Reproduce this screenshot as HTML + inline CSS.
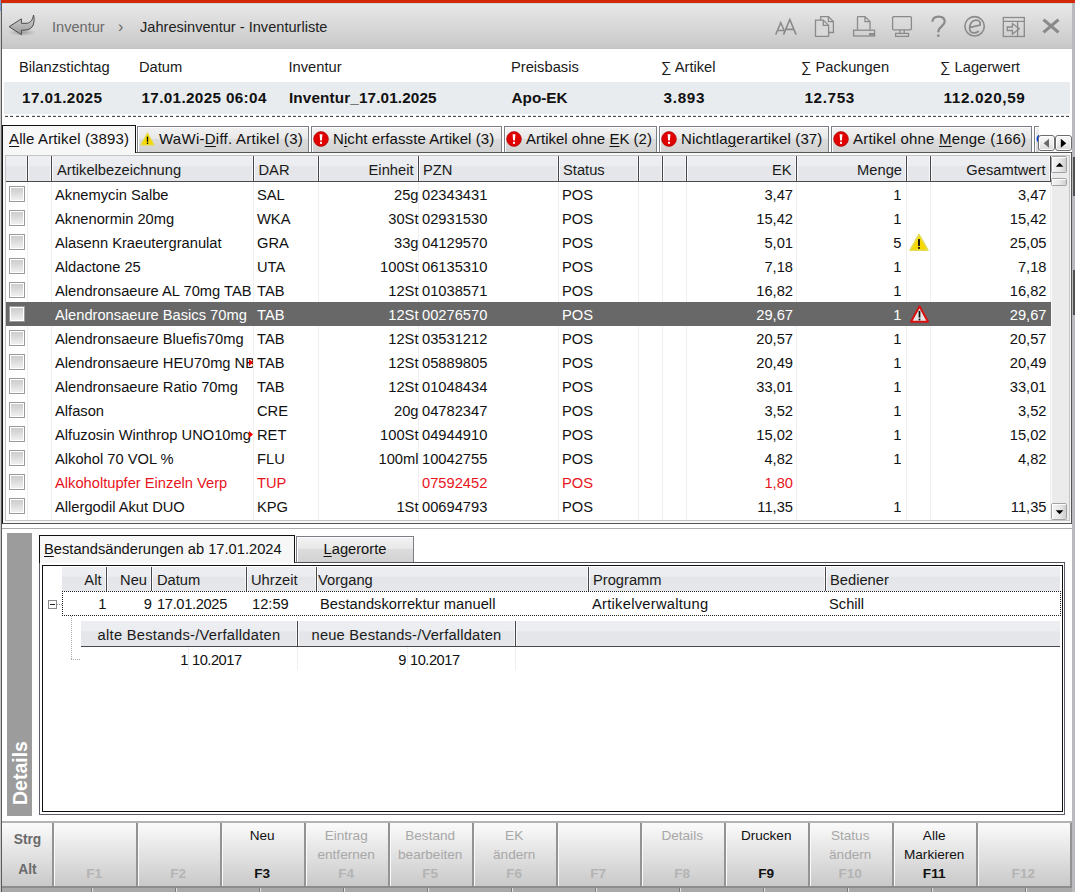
<!DOCTYPE html>
<html><head><meta charset="utf-8"><style>
html,body{margin:0;padding:0;}
body{width:1075px;height:892px;position:relative;overflow:hidden;background:#fff;font-family:"Liberation Sans", sans-serif;}
body>div, body>svg{position:absolute;}
.t{white-space:pre;line-height:1;}
u{text-decoration:underline;text-decoration-thickness:1px;text-underline-offset:2px;}
</style></head><body>
<div style="left:0px;top:0px;width:1075px;height:3px;background:#d42a08"></div>
<div style="left:0px;top:0px;width:1px;height:11px;background:#7d9fd6"></div>
<div style="left:0px;top:11px;width:1px;height:881px;background:#c8c8c8"></div>
<div style="left:1px;top:3px;width:1px;height:889px;background:#5a5a5a"></div>
<div style="left:1072px;top:3px;width:3px;height:889px;background:#b9babe"></div>
<div style="left:1073px;top:157px;width:2px;height:39px;background:#505050"></div>
<div style="left:1073px;top:270px;width:2px;height:45px;background:#505050"></div>
<div style="left:2px;top:3px;width:1070px;height:1px;background:#c9d9dc"></div>
<div style="left:2px;top:4px;width:1070px;height:45px;background:linear-gradient(#e8e8e8,#c9c9c9 95%,#c2c2c2)"></div>
<svg style="left:6px;top:12px" width="32" height="28" viewBox="6 12 32 28">
<defs><linearGradient id="ag" x1="0" y1="0" x2="0" y2="1"><stop offset="0" stop-color="#d4d4d4"/><stop offset="1" stop-color="#9a9a9a"/></linearGradient>
<radialGradient id="sh"><stop offset="0" stop-color="#000" stop-opacity=".25"/><stop offset="1" stop-color="#000" stop-opacity="0"/></radialGradient></defs>
<ellipse cx="22" cy="32.5" rx="14" ry="3.5" fill="url(#sh)"/>
<path d="M9.1 26.7 L21.4 18.9 L21.4 23.3 L26 23.3 C29.6 23.3 32.6 21 33.5 15 C34.4 17.6 34.3 22 33.2 25 C31.8 28.5 28.5 30.1 24 30.2 L21.4 30.2 L21.4 34.6 Z" fill="url(#ag)" stroke="#4a4a4a" stroke-width="1" stroke-linejoin="miter"/>
</svg>
<div class="t" style="left:52px;top:19.94px;font-size:14.60px;font-weight:normal;color:#6a6a6a;transform-origin:0 0;">Inventur</div>
<div class="t" style="left:118px;top:18.76px;font-size:16.00px;font-weight:normal;color:#6a6a6a;transform-origin:0 0;">&#8250;</div>
<div class="t" style="left:140px;top:19.94px;font-size:14.60px;font-weight:normal;color:#222;transform-origin:0 0;">Jahresinventur - Inventurliste</div>
<svg style="left:770px;top:10px" width="300" height="32" viewBox="770 10 300 32" fill="none" stroke="#8a8a8a" stroke-width="1.3">
<path d="M775.7 34.6 L780.7 22.6 L785 32.2 M777.8 30.5 H784.4" stroke-width="1.5"/>
<path d="M783.5 34.6 L789.8 19.5 L796.1 34.6 M786.2 29.4 H793.4" stroke-width="1.6"/>
<path d="M820.7 20 V16.6 H828.4 L833.4 21.6 V32.5 H828.8 M828.4 16.6 V21.6 H833.4"/>
<path d="M815.5 20.1 H823.3 L828.6 25.4 V36.4 H815.5 Z" fill="#d9d9d9"/>
<path d="M823.3 20.1 V25.4 H828.6"/>
<path d="M857.5 16.6 H865 L870 21.6 V30 M857.5 16.6 V30 M865 16.6 V21.6 H870"/>
<rect x="853.6" y="30.2" width="21" height="5.8"/>
<rect x="869" y="33" width="5" height="2.5" fill="#8a8a8a" stroke="none"/>
<rect x="892.6" y="16.6" width="18.8" height="13.2" rx="1.2"/>
<path d="M899.9 30 V33.3 M904.2 30 V33.3"/>
<rect x="895.6" y="33.4" width="12.9" height="3"/>
<path d="M932.4 21.8 C932.6 18.4 935 16.7 938.6 16.7 C942.4 16.7 944.7 18.8 944.7 21.8 C944.7 26 938.4 26.6 938.3 32.2" stroke-width="2.2"/>
<rect x="937.1" y="34.5" width="2.4" height="2.3" fill="#8a8a8a" stroke="none"/>
<circle cx="974.6" cy="26.3" r="9.7" stroke-width="1.6"/>
<path d="M970.4 27.3 L980.1 25 C980.9 21.7 978.7 20 976.1 20 C972.2 20 969.6 23.8 969.6 28 C969.6 31.3 971.3 32.8 973.7 32.8 C975.5 32.8 977.1 32.2 978.3 31.4" stroke-width="1.75" stroke-linecap="round"/>
<rect x="1003.3" y="17.5" width="21" height="19"/>
<path d="M1003.3 21.4 H1024.3 M1017.6 21.4 V36.5"/>
<path d="M1007.3 27 H1012.4 V23.5 L1019.3 28.8 L1012.4 34.1 V30.5 H1007.3 Z" stroke-linejoin="miter"/>
<path d="M1043.5 19.6 L1058.5 32.4 M1058.5 19.6 L1043.5 32.4" stroke-width="3.2"/>
</svg>
<div class="t" style="left:19px;top:60.16px;font-size:14.70px;font-weight:normal;color:#1a1a1a;transform-origin:0 0;">Bilanzstichtag</div>
<div class="t" style="left:139px;top:60.16px;font-size:14.70px;font-weight:normal;color:#1a1a1a;transform-origin:0 0;">Datum</div>
<div class="t" style="left:288.5px;top:60.16px;font-size:14.70px;font-weight:normal;color:#1a1a1a;transform-origin:0 0;">Inventur</div>
<div class="t" style="left:511px;top:60.16px;font-size:14.70px;font-weight:normal;color:#1a1a1a;transform-origin:0 0;">Preisbasis</div>
<div class="t" style="left:661px;top:60.16px;font-size:14.70px;font-weight:normal;color:#1a1a1a;transform-origin:0 0;">&#8721; Artikel</div>
<div class="t" style="left:801px;top:60.16px;font-size:14.70px;font-weight:normal;color:#1a1a1a;transform-origin:0 0;">&#8721; Packungen</div>
<div class="t" style="left:940px;top:60.16px;font-size:14.70px;font-weight:normal;color:#1a1a1a;transform-origin:0 0;">&#8721; Lagerwert</div>
<div style="left:4px;top:82px;width:1066px;height:32px;background:#e9ecef"></div>
<div class="t" style="left:22px;top:89.55px;font-size:15.30px;font-weight:bold;color:#111;transform-origin:0 0;letter-spacing:0.38px">17.01.2025</div>
<div class="t" style="left:141.5px;top:89.55px;font-size:15.30px;font-weight:bold;color:#111;transform-origin:0 0;letter-spacing:0.33px">17.01.2025 06:04</div>
<div class="t" style="left:289px;top:89.55px;font-size:15.30px;font-weight:bold;color:#111;transform-origin:0 0;letter-spacing:0.12px">Inventur_17.01.2025</div>
<div class="t" style="left:511.5px;top:89.55px;font-size:15.30px;font-weight:bold;color:#111;transform-origin:0 0;letter-spacing:0px">Apo-EK</div>
<div class="t" style="left:663.5px;top:89.55px;font-size:15.30px;font-weight:bold;color:#111;transform-origin:0 0;letter-spacing:0.7px">3.893</div>
<div class="t" style="left:804.5px;top:89.55px;font-size:15.30px;font-weight:bold;color:#111;transform-origin:0 0;letter-spacing:0.6px">12.753</div>
<div class="t" style="left:943.5px;top:89.55px;font-size:15.30px;font-weight:bold;color:#111;transform-origin:0 0;letter-spacing:0.62px">112.020,59</div>
<div style="left:5px;top:115px;width:1065px;height:1px;background:repeating-linear-gradient(90deg,#dfe2e5 0 3px,transparent 3px 5px,#dfe2e5 5px 8px,transparent 8px 11px,#dfe2e5 11px 14px,transparent 14px 16px)"></div>
<div style="left:5px;top:116px;width:1065px;height:1px;background:repeating-linear-gradient(90deg,#4a4a4a 0 3px,transparent 3px 5px,#4a4a4a 5px 8px,transparent 8px 11px,#4a4a4a 11px 14px,transparent 14px 16px)"></div>
<div style="left:2px;top:152px;width:1070px;height:1px;background:#555"></div>
<div style="left:2px;top:125px;width:134px;height:28px;background:#f7f7f7;border-top:1px solid #111;border-left:1px solid #111;border-right:1px solid #111;box-sizing:border-box"></div>
<div class="t" style="left:9px;top:131.10px;font-size:15.00px;font-weight:normal;color:#111;transform-origin:0 0;letter-spacing:0.13px"><u>A</u>lle Artikel (3893)</div>
<div style="left:137px;top:126px;width:172px;height:26px;background:linear-gradient(#f2f2f2 0,#e9e9e9 45%,#dcdcdc 50%,#d2d2d2 100%);border:1px solid #7c7e86;border-bottom:none;box-sizing:border-box;box-shadow:inset 1px 1px 0 #fff"></div>
<svg style="left:140px;top:132px" width="15" height="14" viewBox="0 0 15 14" preserveAspectRatio="none">
<path d="M7.5 1 L14.2 13 H0.8 Z" fill="#f7d900" stroke="#e3dc55" stroke-width="1.2" stroke-linejoin="round"/>
<rect x="6.8" y="4.6" width="1.4" height="5.2" fill="#111"/><rect x="6.8" y="10.6" width="1.4" height="1.4" fill="#111"/></svg>
<div class="t" style="left:159px;top:131.10px;font-size:15.00px;font-weight:normal;color:#111;transform-origin:0 0;letter-spacing:0.26px">WaWi-<u>D</u>iff. Artikel (3)</div>
<div style="left:311px;top:126px;width:191px;height:26px;background:linear-gradient(#f2f2f2 0,#e9e9e9 45%,#dcdcdc 50%,#d2d2d2 100%);border:1px solid #7c7e86;border-bottom:none;box-sizing:border-box;box-shadow:inset 1px 1px 0 #fff"></div>
<svg style="left:313px;top:130.5px" width="16" height="16" viewBox="0 0 16 16">
<circle cx="8" cy="8" r="7.4" fill="#e00000" stroke="#a00000" stroke-width="0.6"/>
<path d="M6.6 3.2 H9.4 L8.9 9.6 H7.1 Z" fill="#fff"/><rect x="7" y="10.8" width="2" height="2" fill="#fff"/></svg>
<div class="t" style="left:333px;top:131.10px;font-size:15.00px;font-weight:normal;color:#111;transform-origin:0 0;letter-spacing:0.08px">N<u>i</u>cht erfasste Artikel (3)</div>
<div style="left:504px;top:126px;width:153px;height:26px;background:linear-gradient(#f2f2f2 0,#e9e9e9 45%,#dcdcdc 50%,#d2d2d2 100%);border:1px solid #7c7e86;border-bottom:none;box-sizing:border-box;box-shadow:inset 1px 1px 0 #fff"></div>
<svg style="left:506px;top:130.5px" width="16" height="16" viewBox="0 0 16 16">
<circle cx="8" cy="8" r="7.4" fill="#e00000" stroke="#a00000" stroke-width="0.6"/>
<path d="M6.6 3.2 H9.4 L8.9 9.6 H7.1 Z" fill="#fff"/><rect x="7" y="10.8" width="2" height="2" fill="#fff"/></svg>
<div class="t" style="left:526px;top:131.10px;font-size:15.00px;font-weight:normal;color:#111;transform-origin:0 0;letter-spacing:0px">Artikel ohne <u>E</u>K (2)</div>
<div style="left:659px;top:126px;width:170px;height:26px;background:linear-gradient(#f2f2f2 0,#e9e9e9 45%,#dcdcdc 50%,#d2d2d2 100%);border:1px solid #7c7e86;border-bottom:none;box-sizing:border-box;box-shadow:inset 1px 1px 0 #fff"></div>
<svg style="left:661px;top:130.5px" width="16" height="16" viewBox="0 0 16 16">
<circle cx="8" cy="8" r="7.4" fill="#e00000" stroke="#a00000" stroke-width="0.6"/>
<path d="M6.6 3.2 H9.4 L8.9 9.6 H7.1 Z" fill="#fff"/><rect x="7" y="10.8" width="2" height="2" fill="#fff"/></svg>
<div class="t" style="left:681px;top:131.10px;font-size:15.00px;font-weight:normal;color:#111;transform-origin:0 0;letter-spacing:0.14px">Nichtla<u>g</u>erartikel (37)</div>
<div style="left:831px;top:126px;width:201px;height:26px;background:linear-gradient(#f2f2f2 0,#e9e9e9 45%,#dcdcdc 50%,#d2d2d2 100%);border:1px solid #7c7e86;border-bottom:none;box-sizing:border-box;box-shadow:inset 1px 1px 0 #fff"></div>
<svg style="left:833px;top:130.5px" width="16" height="16" viewBox="0 0 16 16">
<circle cx="8" cy="8" r="7.4" fill="#e00000" stroke="#a00000" stroke-width="0.6"/>
<path d="M6.6 3.2 H9.4 L8.9 9.6 H7.1 Z" fill="#fff"/><rect x="7" y="10.8" width="2" height="2" fill="#fff"/></svg>
<div class="t" style="left:853px;top:131.10px;font-size:15.00px;font-weight:normal;color:#111;transform-origin:0 0;letter-spacing:0.2px">Artikel ohne <u>M</u>enge (166)</div>
<div style="left:1034px;top:126px;width:5px;height:26px;background:linear-gradient(#f2f2f2,#d2d2d2);border-left:1px solid #7c7e86;border-top:1px solid #7c7e86;box-sizing:border-box;box-shadow:inset 1px 1px 0 #fff"></div>
<svg style="left:1036px;top:134px" width="3" height="10" viewBox="0 0 3 10"><ellipse cx="7" cy="5" rx="6.5" ry="5.5" fill="#0a3fe0"/></svg>
<div style="left:1038px;top:135px;width:17px;height:16px;background:linear-gradient(#f8f8f8 0,#ececec 55%,#d8d8d8 100%);border:1px solid #6e6e6e;border-radius:3px;box-sizing:border-box;box-shadow:inset 0 0 0 1px #fff"></div>
<svg style="left:1038px;top:135px" width="17" height="16" viewBox="0 0 17 16"><path d="M5.6 8.2 L11 3.8 V12.8 Z" fill="#6a6a6a"/></svg>
<div style="left:1055px;top:135px;width:17px;height:16px;background:linear-gradient(#f8f8f8 0,#ececec 55%,#d8d8d8 100%);border:1px solid #6e6e6e;border-radius:3px;box-sizing:border-box;box-shadow:inset 0 0 0 1px #fff"></div>
<svg style="left:1055px;top:135px" width="17" height="16" viewBox="0 0 17 16"><path d="M11.2 8.2 L5.8 3.8 V12.8 Z" fill="#000"/></svg>
<div style="left:2px;top:153px;width:1070px;height:371px;background:#f7f7f7;border-left:1px solid #111;border-right:1px solid #555;border-bottom:1px solid #555;box-sizing:border-box"></div>
<div style="left:5px;top:155px;width:1065px;height:366px;background:#fff;border:1px solid #c4c4c4;box-sizing:border-box"></div>
<div style="left:6px;top:156px;width:1044px;height:25px;background:linear-gradient(#eceef1 0,#ebedf0 38%,#e3e5e8 44%,#e6e7ea 100%)"></div>
<div style="left:6px;top:181px;width:1045px;height:1px;background:#48484d"></div>
<div style="left:26px;top:156px;width:1px;height:25px;background:#f7f7f7"></div>
<div style="left:28px;top:156px;width:1px;height:25px;background:#fbfbfb"></div>
<div style="left:27px;top:156px;width:1px;height:25px;background:#45454a"></div>
<div style="left:27px;top:182px;width:1px;height:338px;background:#efefef"></div>
<div style="left:50px;top:156px;width:1px;height:25px;background:#f7f7f7"></div>
<div style="left:52px;top:156px;width:1px;height:25px;background:#fbfbfb"></div>
<div style="left:51px;top:156px;width:1px;height:25px;background:#45454a"></div>
<div style="left:51px;top:182px;width:1px;height:338px;background:#efefef"></div>
<div style="left:252px;top:156px;width:1px;height:25px;background:#f7f7f7"></div>
<div style="left:254px;top:156px;width:1px;height:25px;background:#fbfbfb"></div>
<div style="left:253px;top:156px;width:1px;height:25px;background:#45454a"></div>
<div style="left:253px;top:182px;width:1px;height:338px;background:#efefef"></div>
<div style="left:317px;top:156px;width:1px;height:25px;background:#f7f7f7"></div>
<div style="left:319px;top:156px;width:1px;height:25px;background:#fbfbfb"></div>
<div style="left:318px;top:156px;width:1px;height:25px;background:#45454a"></div>
<div style="left:318px;top:182px;width:1px;height:338px;background:#efefef"></div>
<div style="left:417px;top:156px;width:1px;height:25px;background:#f7f7f7"></div>
<div style="left:419px;top:156px;width:1px;height:25px;background:#fbfbfb"></div>
<div style="left:418px;top:156px;width:1px;height:25px;background:#45454a"></div>
<div style="left:418px;top:182px;width:1px;height:338px;background:#efefef"></div>
<div style="left:557px;top:156px;width:1px;height:25px;background:#f7f7f7"></div>
<div style="left:559px;top:156px;width:1px;height:25px;background:#fbfbfb"></div>
<div style="left:558px;top:156px;width:1px;height:25px;background:#45454a"></div>
<div style="left:558px;top:182px;width:1px;height:338px;background:#efefef"></div>
<div style="left:637px;top:156px;width:1px;height:25px;background:#f7f7f7"></div>
<div style="left:639px;top:156px;width:1px;height:25px;background:#fbfbfb"></div>
<div style="left:638px;top:156px;width:1px;height:25px;background:#45454a"></div>
<div style="left:638px;top:182px;width:1px;height:338px;background:#efefef"></div>
<div style="left:661px;top:156px;width:1px;height:25px;background:#f7f7f7"></div>
<div style="left:663px;top:156px;width:1px;height:25px;background:#fbfbfb"></div>
<div style="left:662px;top:156px;width:1px;height:25px;background:#45454a"></div>
<div style="left:662px;top:182px;width:1px;height:338px;background:#efefef"></div>
<div style="left:685px;top:156px;width:1px;height:25px;background:#f7f7f7"></div>
<div style="left:687px;top:156px;width:1px;height:25px;background:#fbfbfb"></div>
<div style="left:686px;top:156px;width:1px;height:25px;background:#45454a"></div>
<div style="left:686px;top:182px;width:1px;height:338px;background:#efefef"></div>
<div style="left:795px;top:156px;width:1px;height:25px;background:#f7f7f7"></div>
<div style="left:797px;top:156px;width:1px;height:25px;background:#fbfbfb"></div>
<div style="left:796px;top:156px;width:1px;height:25px;background:#45454a"></div>
<div style="left:796px;top:182px;width:1px;height:338px;background:#efefef"></div>
<div style="left:905px;top:156px;width:1px;height:25px;background:#f7f7f7"></div>
<div style="left:907px;top:156px;width:1px;height:25px;background:#fbfbfb"></div>
<div style="left:906px;top:156px;width:1px;height:25px;background:#45454a"></div>
<div style="left:906px;top:182px;width:1px;height:338px;background:#efefef"></div>
<div style="left:929px;top:156px;width:1px;height:25px;background:#f7f7f7"></div>
<div style="left:931px;top:156px;width:1px;height:25px;background:#fbfbfb"></div>
<div style="left:930px;top:156px;width:1px;height:25px;background:#45454a"></div>
<div style="left:930px;top:182px;width:1px;height:338px;background:#efefef"></div>
<div style="left:1049px;top:156px;width:1px;height:25px;background:#f7f7f7"></div>
<div style="left:1051px;top:156px;width:1px;height:25px;background:#fbfbfb"></div>
<div style="left:1050px;top:156px;width:1px;height:25px;background:#45454a"></div>
<div style="left:1050px;top:182px;width:1px;height:338px;background:#efefef"></div>
<div class="t" style="left:57px;top:162.56px;font-size:14.70px;font-weight:normal;color:#1a1a1a;transform-origin:0 0;">Artikelbezeichnung</div>
<div class="t" style="left:258.5px;top:162.56px;font-size:14.70px;font-weight:normal;color:#1a1a1a;transform-origin:0 0;">DAR</div>
<div class="t" style="left:13.5px;width:400px;text-align:right;top:162.56px;font-size:14.70px;font-weight:normal;color:#1a1a1a;transform-origin:100% 0;">Einheit</div>
<div class="t" style="left:423px;top:162.56px;font-size:14.70px;font-weight:normal;color:#1a1a1a;transform-origin:0 0;">PZN</div>
<div class="t" style="left:563px;top:162.56px;font-size:14.70px;font-weight:normal;color:#1a1a1a;transform-origin:0 0;">Status</div>
<div class="t" style="left:391.5px;width:400px;text-align:right;top:162.56px;font-size:14.70px;font-weight:normal;color:#1a1a1a;transform-origin:100% 0;">EK</div>
<div class="t" style="left:502px;width:400px;text-align:right;top:162.56px;font-size:14.70px;font-weight:normal;color:#1a1a1a;transform-origin:100% 0;">Menge</div>
<div class="t" style="left:645.5px;width:400px;text-align:right;top:162.56px;font-size:14.70px;font-weight:normal;color:#1a1a1a;transform-origin:100% 0;">Gesamtwert</div>
<div style="left:9px;top:186px;width:16px;height:16px;background:linear-gradient(#c9c9c9,#f2f2f2);border:1px solid #9a9a9a;box-shadow:inset 0 0 0 1px #fff;box-sizing:border-box"></div>
<div style="left:55px;top:182px;width:198px;height:24px;overflow:hidden"><div class="t" style="position:absolute;left:0;top:5.86px;font-size:14.70px;color:#111;transform:scaleX(1.0000);transform-origin:0 0">Aknemycin Salbe</div></div>
<div class="t" style="left:257px;top:187.86px;font-size:14.70px;font-weight:normal;color:#111;transform-origin:0 0;">SAL</div>
<div class="t" style="left:18.5px;width:400px;text-align:right;top:187.86px;font-size:14.70px;font-weight:normal;color:#111;transform-origin:100% 0;">25g</div>
<div class="t" style="left:422px;top:187.86px;font-size:14.70px;font-weight:normal;color:#111;transform-origin:0 0;">02343431</div>
<div class="t" style="left:562px;top:187.86px;font-size:14.70px;font-weight:normal;color:#111;transform-origin:0 0;">POS</div>
<div class="t" style="left:393px;width:400px;text-align:right;top:187.86px;font-size:14.70px;font-weight:normal;color:#111;transform-origin:100% 0;">3,47</div>
<div class="t" style="left:501.5px;width:400px;text-align:right;top:187.86px;font-size:14.70px;font-weight:normal;color:#111;transform-origin:100% 0;">1</div>
<div class="t" style="left:646.5px;width:400px;text-align:right;top:187.86px;font-size:14.70px;font-weight:normal;color:#111;transform-origin:100% 0;">3,47</div>
<div style="left:9px;top:210px;width:16px;height:16px;background:linear-gradient(#c9c9c9,#f2f2f2);border:1px solid #9a9a9a;box-shadow:inset 0 0 0 1px #fff;box-sizing:border-box"></div>
<div style="left:55px;top:206px;width:198px;height:24px;overflow:hidden"><div class="t" style="position:absolute;left:0;top:5.86px;font-size:14.70px;color:#111;transform:scaleX(1.0000);transform-origin:0 0">Aknenormin 20mg</div></div>
<div class="t" style="left:257px;top:211.86px;font-size:14.70px;font-weight:normal;color:#111;transform-origin:0 0;">WKA</div>
<div class="t" style="left:18.5px;width:400px;text-align:right;top:211.86px;font-size:14.70px;font-weight:normal;color:#111;transform-origin:100% 0;">30St</div>
<div class="t" style="left:422px;top:211.86px;font-size:14.70px;font-weight:normal;color:#111;transform-origin:0 0;">02931530</div>
<div class="t" style="left:562px;top:211.86px;font-size:14.70px;font-weight:normal;color:#111;transform-origin:0 0;">POS</div>
<div class="t" style="left:393px;width:400px;text-align:right;top:211.86px;font-size:14.70px;font-weight:normal;color:#111;transform-origin:100% 0;">15,42</div>
<div class="t" style="left:501.5px;width:400px;text-align:right;top:211.86px;font-size:14.70px;font-weight:normal;color:#111;transform-origin:100% 0;">1</div>
<div class="t" style="left:646.5px;width:400px;text-align:right;top:211.86px;font-size:14.70px;font-weight:normal;color:#111;transform-origin:100% 0;">15,42</div>
<div style="left:9px;top:234px;width:16px;height:16px;background:linear-gradient(#c9c9c9,#f2f2f2);border:1px solid #9a9a9a;box-shadow:inset 0 0 0 1px #fff;box-sizing:border-box"></div>
<div style="left:55px;top:230px;width:198px;height:24px;overflow:hidden"><div class="t" style="position:absolute;left:0;top:5.86px;font-size:14.70px;color:#111;transform:scaleX(1.0000);transform-origin:0 0">Alasenn Kraeutergranulat</div></div>
<div class="t" style="left:257px;top:235.86px;font-size:14.70px;font-weight:normal;color:#111;transform-origin:0 0;">GRA</div>
<div class="t" style="left:18.5px;width:400px;text-align:right;top:235.86px;font-size:14.70px;font-weight:normal;color:#111;transform-origin:100% 0;">33g</div>
<div class="t" style="left:422px;top:235.86px;font-size:14.70px;font-weight:normal;color:#111;transform-origin:0 0;">04129570</div>
<div class="t" style="left:562px;top:235.86px;font-size:14.70px;font-weight:normal;color:#111;transform-origin:0 0;">POS</div>
<div class="t" style="left:393px;width:400px;text-align:right;top:235.86px;font-size:14.70px;font-weight:normal;color:#111;transform-origin:100% 0;">5,01</div>
<div class="t" style="left:501.5px;width:400px;text-align:right;top:235.86px;font-size:14.70px;font-weight:normal;color:#111;transform-origin:100% 0;">5</div>
<svg style="left:909px;top:232.5px" width="20" height="18.5" viewBox="0 0 15 14" preserveAspectRatio="none">
<path d="M7.5 1 L14.2 13 H0.8 Z" fill="#f7d900" stroke="#e3dc55" stroke-width="1.2" stroke-linejoin="round"/>
<rect x="6.8" y="4.6" width="1.4" height="5.2" fill="#111"/><rect x="6.8" y="10.6" width="1.4" height="1.4" fill="#111"/></svg>
<div class="t" style="left:646.5px;width:400px;text-align:right;top:235.86px;font-size:14.70px;font-weight:normal;color:#111;transform-origin:100% 0;">25,05</div>
<div style="left:9px;top:258px;width:16px;height:16px;background:linear-gradient(#c9c9c9,#f2f2f2);border:1px solid #9a9a9a;box-shadow:inset 0 0 0 1px #fff;box-sizing:border-box"></div>
<div style="left:55px;top:254px;width:198px;height:24px;overflow:hidden"><div class="t" style="position:absolute;left:0;top:5.86px;font-size:14.70px;color:#111;transform:scaleX(1.0000);transform-origin:0 0">Aldactone 25</div></div>
<div class="t" style="left:257px;top:259.86px;font-size:14.70px;font-weight:normal;color:#111;transform-origin:0 0;">UTA</div>
<div class="t" style="left:18.5px;width:400px;text-align:right;top:259.86px;font-size:14.70px;font-weight:normal;color:#111;transform-origin:100% 0;">100St</div>
<div class="t" style="left:422px;top:259.86px;font-size:14.70px;font-weight:normal;color:#111;transform-origin:0 0;">06135310</div>
<div class="t" style="left:562px;top:259.86px;font-size:14.70px;font-weight:normal;color:#111;transform-origin:0 0;">POS</div>
<div class="t" style="left:393px;width:400px;text-align:right;top:259.86px;font-size:14.70px;font-weight:normal;color:#111;transform-origin:100% 0;">7,18</div>
<div class="t" style="left:501.5px;width:400px;text-align:right;top:259.86px;font-size:14.70px;font-weight:normal;color:#111;transform-origin:100% 0;">1</div>
<div class="t" style="left:646.5px;width:400px;text-align:right;top:259.86px;font-size:14.70px;font-weight:normal;color:#111;transform-origin:100% 0;">7,18</div>
<div style="left:9px;top:282px;width:16px;height:16px;background:linear-gradient(#c9c9c9,#f2f2f2);border:1px solid #9a9a9a;box-shadow:inset 0 0 0 1px #fff;box-sizing:border-box"></div>
<div style="left:55px;top:278px;width:198px;height:24px;overflow:hidden"><div class="t" style="position:absolute;left:0;top:5.86px;font-size:14.70px;color:#111;transform:scaleX(1.0000);transform-origin:0 0">Alendronsaeure AL 70mg TAB</div></div>
<div class="t" style="left:257px;top:283.86px;font-size:14.70px;font-weight:normal;color:#111;transform-origin:0 0;">TAB</div>
<div class="t" style="left:18.5px;width:400px;text-align:right;top:283.86px;font-size:14.70px;font-weight:normal;color:#111;transform-origin:100% 0;">12St</div>
<div class="t" style="left:422px;top:283.86px;font-size:14.70px;font-weight:normal;color:#111;transform-origin:0 0;">01038571</div>
<div class="t" style="left:562px;top:283.86px;font-size:14.70px;font-weight:normal;color:#111;transform-origin:0 0;">POS</div>
<div class="t" style="left:393px;width:400px;text-align:right;top:283.86px;font-size:14.70px;font-weight:normal;color:#111;transform-origin:100% 0;">16,82</div>
<div class="t" style="left:501.5px;width:400px;text-align:right;top:283.86px;font-size:14.70px;font-weight:normal;color:#111;transform-origin:100% 0;">1</div>
<div class="t" style="left:646.5px;width:400px;text-align:right;top:283.86px;font-size:14.70px;font-weight:normal;color:#111;transform-origin:100% 0;">16,82</div>
<div style="left:6px;top:302px;width:1045px;height:24px;background:#686868"></div>
<div style="left:9px;top:306px;width:16px;height:16px;background:linear-gradient(#c9c9c9,#f2f2f2);border:1px solid #9a9a9a;box-shadow:inset 0 0 0 1px #fff;box-sizing:border-box"></div>
<div style="left:55px;top:302px;width:198px;height:24px;overflow:hidden"><div class="t" style="position:absolute;left:0;top:5.86px;font-size:14.70px;color:#fff;transform:scaleX(1.0000);transform-origin:0 0">Alendronsaeure Basics 70mg</div></div>
<div class="t" style="left:257px;top:307.86px;font-size:14.70px;font-weight:normal;color:#fff;transform-origin:0 0;">TAB</div>
<div class="t" style="left:18.5px;width:400px;text-align:right;top:307.86px;font-size:14.70px;font-weight:normal;color:#fff;transform-origin:100% 0;">12St</div>
<div class="t" style="left:422px;top:307.86px;font-size:14.70px;font-weight:normal;color:#fff;transform-origin:0 0;">00276570</div>
<div class="t" style="left:562px;top:307.86px;font-size:14.70px;font-weight:normal;color:#fff;transform-origin:0 0;">POS</div>
<div class="t" style="left:393px;width:400px;text-align:right;top:307.86px;font-size:14.70px;font-weight:normal;color:#fff;transform-origin:100% 0;">29,67</div>
<div class="t" style="left:501.5px;width:400px;text-align:right;top:307.86px;font-size:14.70px;font-weight:normal;color:#fff;transform-origin:100% 0;">1</div>
<svg style="left:909.5px;top:305px" width="19" height="18" viewBox="0 0 15 14" preserveAspectRatio="none">
<path d="M7.5 1 L14.2 13 H0.8 Z" fill="#e6e6e6" stroke="#d81010" stroke-width="1.6" stroke-linejoin="round"/>
<rect x="6.8" y="4.6" width="1.4" height="5.2" fill="#111"/><rect x="6.8" y="10.6" width="1.4" height="1.4" fill="#111"/></svg>
<div class="t" style="left:646.5px;width:400px;text-align:right;top:307.86px;font-size:14.70px;font-weight:normal;color:#fff;transform-origin:100% 0;">29,67</div>
<div style="left:9px;top:330px;width:16px;height:16px;background:linear-gradient(#c9c9c9,#f2f2f2);border:1px solid #9a9a9a;box-shadow:inset 0 0 0 1px #fff;box-sizing:border-box"></div>
<div style="left:55px;top:326px;width:198px;height:24px;overflow:hidden"><div class="t" style="position:absolute;left:0;top:5.86px;font-size:14.70px;color:#111;transform:scaleX(1.0000);transform-origin:0 0">Alendronsaeure Bluefis70mg</div></div>
<div class="t" style="left:257px;top:331.86px;font-size:14.70px;font-weight:normal;color:#111;transform-origin:0 0;">TAB</div>
<div class="t" style="left:18.5px;width:400px;text-align:right;top:331.86px;font-size:14.70px;font-weight:normal;color:#111;transform-origin:100% 0;">12St</div>
<div class="t" style="left:422px;top:331.86px;font-size:14.70px;font-weight:normal;color:#111;transform-origin:0 0;">03531212</div>
<div class="t" style="left:562px;top:331.86px;font-size:14.70px;font-weight:normal;color:#111;transform-origin:0 0;">POS</div>
<div class="t" style="left:393px;width:400px;text-align:right;top:331.86px;font-size:14.70px;font-weight:normal;color:#111;transform-origin:100% 0;">20,57</div>
<div class="t" style="left:501.5px;width:400px;text-align:right;top:331.86px;font-size:14.70px;font-weight:normal;color:#111;transform-origin:100% 0;">1</div>
<div class="t" style="left:646.5px;width:400px;text-align:right;top:331.86px;font-size:14.70px;font-weight:normal;color:#111;transform-origin:100% 0;">20,57</div>
<div style="left:9px;top:354px;width:16px;height:16px;background:linear-gradient(#c9c9c9,#f2f2f2);border:1px solid #9a9a9a;box-shadow:inset 0 0 0 1px #fff;box-sizing:border-box"></div>
<div style="left:55px;top:350px;width:198px;height:24px;overflow:hidden"><div class="t" style="position:absolute;left:0;top:5.86px;font-size:14.70px;color:#111;transform:scaleX(1.0000);transform-origin:0 0">Alendronsaeure HEU70mg NB</div></div>
<div class="t" style="left:257px;top:355.86px;font-size:14.70px;font-weight:normal;color:#111;transform-origin:0 0;">TAB</div>
<div class="t" style="left:18.5px;width:400px;text-align:right;top:355.86px;font-size:14.70px;font-weight:normal;color:#111;transform-origin:100% 0;">12St</div>
<div class="t" style="left:422px;top:355.86px;font-size:14.70px;font-weight:normal;color:#111;transform-origin:0 0;">05889805</div>
<div class="t" style="left:562px;top:355.86px;font-size:14.70px;font-weight:normal;color:#111;transform-origin:0 0;">POS</div>
<div class="t" style="left:393px;width:400px;text-align:right;top:355.86px;font-size:14.70px;font-weight:normal;color:#111;transform-origin:100% 0;">20,49</div>
<div class="t" style="left:501.5px;width:400px;text-align:right;top:355.86px;font-size:14.70px;font-weight:normal;color:#111;transform-origin:100% 0;">1</div>
<div class="t" style="left:646.5px;width:400px;text-align:right;top:355.86px;font-size:14.70px;font-weight:normal;color:#111;transform-origin:100% 0;">20,49</div>
<div style="left:9px;top:378px;width:16px;height:16px;background:linear-gradient(#c9c9c9,#f2f2f2);border:1px solid #9a9a9a;box-shadow:inset 0 0 0 1px #fff;box-sizing:border-box"></div>
<div style="left:55px;top:374px;width:198px;height:24px;overflow:hidden"><div class="t" style="position:absolute;left:0;top:5.86px;font-size:14.70px;color:#111;transform:scaleX(1.0000);transform-origin:0 0">Alendronsaeure Ratio 70mg</div></div>
<div class="t" style="left:257px;top:379.86px;font-size:14.70px;font-weight:normal;color:#111;transform-origin:0 0;">TAB</div>
<div class="t" style="left:18.5px;width:400px;text-align:right;top:379.86px;font-size:14.70px;font-weight:normal;color:#111;transform-origin:100% 0;">12St</div>
<div class="t" style="left:422px;top:379.86px;font-size:14.70px;font-weight:normal;color:#111;transform-origin:0 0;">01048434</div>
<div class="t" style="left:562px;top:379.86px;font-size:14.70px;font-weight:normal;color:#111;transform-origin:0 0;">POS</div>
<div class="t" style="left:393px;width:400px;text-align:right;top:379.86px;font-size:14.70px;font-weight:normal;color:#111;transform-origin:100% 0;">33,01</div>
<div class="t" style="left:501.5px;width:400px;text-align:right;top:379.86px;font-size:14.70px;font-weight:normal;color:#111;transform-origin:100% 0;">1</div>
<div class="t" style="left:646.5px;width:400px;text-align:right;top:379.86px;font-size:14.70px;font-weight:normal;color:#111;transform-origin:100% 0;">33,01</div>
<div style="left:9px;top:402px;width:16px;height:16px;background:linear-gradient(#c9c9c9,#f2f2f2);border:1px solid #9a9a9a;box-shadow:inset 0 0 0 1px #fff;box-sizing:border-box"></div>
<div style="left:55px;top:398px;width:198px;height:24px;overflow:hidden"><div class="t" style="position:absolute;left:0;top:5.86px;font-size:14.70px;color:#111;transform:scaleX(1.0000);transform-origin:0 0">Alfason</div></div>
<div class="t" style="left:257px;top:403.86px;font-size:14.70px;font-weight:normal;color:#111;transform-origin:0 0;">CRE</div>
<div class="t" style="left:18.5px;width:400px;text-align:right;top:403.86px;font-size:14.70px;font-weight:normal;color:#111;transform-origin:100% 0;">20g</div>
<div class="t" style="left:422px;top:403.86px;font-size:14.70px;font-weight:normal;color:#111;transform-origin:0 0;">04782347</div>
<div class="t" style="left:562px;top:403.86px;font-size:14.70px;font-weight:normal;color:#111;transform-origin:0 0;">POS</div>
<div class="t" style="left:393px;width:400px;text-align:right;top:403.86px;font-size:14.70px;font-weight:normal;color:#111;transform-origin:100% 0;">3,52</div>
<div class="t" style="left:501.5px;width:400px;text-align:right;top:403.86px;font-size:14.70px;font-weight:normal;color:#111;transform-origin:100% 0;">1</div>
<div class="t" style="left:646.5px;width:400px;text-align:right;top:403.86px;font-size:14.70px;font-weight:normal;color:#111;transform-origin:100% 0;">3,52</div>
<div style="left:9px;top:426px;width:16px;height:16px;background:linear-gradient(#c9c9c9,#f2f2f2);border:1px solid #9a9a9a;box-shadow:inset 0 0 0 1px #fff;box-sizing:border-box"></div>
<div style="left:55px;top:422px;width:198px;height:24px;overflow:hidden"><div class="t" style="position:absolute;left:0;top:5.86px;font-size:14.70px;color:#111;transform:scaleX(1.0000);transform-origin:0 0">Alfuzosin Winthrop UNO10mg</div></div>
<div class="t" style="left:257px;top:427.86px;font-size:14.70px;font-weight:normal;color:#111;transform-origin:0 0;">RET</div>
<div class="t" style="left:18.5px;width:400px;text-align:right;top:427.86px;font-size:14.70px;font-weight:normal;color:#111;transform-origin:100% 0;">100St</div>
<div class="t" style="left:422px;top:427.86px;font-size:14.70px;font-weight:normal;color:#111;transform-origin:0 0;">04944910</div>
<div class="t" style="left:562px;top:427.86px;font-size:14.70px;font-weight:normal;color:#111;transform-origin:0 0;">POS</div>
<div class="t" style="left:393px;width:400px;text-align:right;top:427.86px;font-size:14.70px;font-weight:normal;color:#111;transform-origin:100% 0;">15,02</div>
<div class="t" style="left:501.5px;width:400px;text-align:right;top:427.86px;font-size:14.70px;font-weight:normal;color:#111;transform-origin:100% 0;">1</div>
<div class="t" style="left:646.5px;width:400px;text-align:right;top:427.86px;font-size:14.70px;font-weight:normal;color:#111;transform-origin:100% 0;">15,02</div>
<div style="left:9px;top:450px;width:16px;height:16px;background:linear-gradient(#c9c9c9,#f2f2f2);border:1px solid #9a9a9a;box-shadow:inset 0 0 0 1px #fff;box-sizing:border-box"></div>
<div style="left:55px;top:446px;width:198px;height:24px;overflow:hidden"><div class="t" style="position:absolute;left:0;top:5.86px;font-size:14.70px;color:#111;transform:scaleX(1.0000);transform-origin:0 0">Alkohol 70 VOL %</div></div>
<div class="t" style="left:257px;top:451.86px;font-size:14.70px;font-weight:normal;color:#111;transform-origin:0 0;">FLU</div>
<div class="t" style="left:18.5px;width:400px;text-align:right;top:451.86px;font-size:14.70px;font-weight:normal;color:#111;transform-origin:100% 0;">100ml</div>
<div class="t" style="left:422px;top:451.86px;font-size:14.70px;font-weight:normal;color:#111;transform-origin:0 0;">10042755</div>
<div class="t" style="left:562px;top:451.86px;font-size:14.70px;font-weight:normal;color:#111;transform-origin:0 0;">POS</div>
<div class="t" style="left:393px;width:400px;text-align:right;top:451.86px;font-size:14.70px;font-weight:normal;color:#111;transform-origin:100% 0;">4,82</div>
<div class="t" style="left:501.5px;width:400px;text-align:right;top:451.86px;font-size:14.70px;font-weight:normal;color:#111;transform-origin:100% 0;">1</div>
<div class="t" style="left:646.5px;width:400px;text-align:right;top:451.86px;font-size:14.70px;font-weight:normal;color:#111;transform-origin:100% 0;">4,82</div>
<div style="left:9px;top:474px;width:16px;height:16px;background:linear-gradient(#c9c9c9,#f2f2f2);border:1px solid #9a9a9a;box-shadow:inset 0 0 0 1px #fff;box-sizing:border-box"></div>
<div style="left:55px;top:470px;width:198px;height:24px;overflow:hidden"><div class="t" style="position:absolute;left:0;top:5.86px;font-size:14.70px;color:#e8141c;transform:scaleX(1.0000);transform-origin:0 0">Alkoholtupfer Einzeln Verp</div></div>
<div class="t" style="left:257px;top:475.86px;font-size:14.70px;font-weight:normal;color:#e8141c;transform-origin:0 0;">TUP</div>
<div class="t" style="left:422px;top:475.86px;font-size:14.70px;font-weight:normal;color:#e8141c;transform-origin:0 0;">07592452</div>
<div class="t" style="left:562px;top:475.86px;font-size:14.70px;font-weight:normal;color:#e8141c;transform-origin:0 0;">POS</div>
<div class="t" style="left:393px;width:400px;text-align:right;top:475.86px;font-size:14.70px;font-weight:normal;color:#e8141c;transform-origin:100% 0;">1,80</div>
<div style="left:9px;top:498px;width:16px;height:16px;background:linear-gradient(#c9c9c9,#f2f2f2);border:1px solid #9a9a9a;box-shadow:inset 0 0 0 1px #fff;box-sizing:border-box"></div>
<div style="left:55px;top:494px;width:198px;height:24px;overflow:hidden"><div class="t" style="position:absolute;left:0;top:5.86px;font-size:14.70px;color:#111;transform:scaleX(1.0000);transform-origin:0 0">Allergodil Akut DUO</div></div>
<div class="t" style="left:257px;top:499.86px;font-size:14.70px;font-weight:normal;color:#111;transform-origin:0 0;">KPG</div>
<div class="t" style="left:18.5px;width:400px;text-align:right;top:499.86px;font-size:14.70px;font-weight:normal;color:#111;transform-origin:100% 0;">1St</div>
<div class="t" style="left:422px;top:499.86px;font-size:14.70px;font-weight:normal;color:#111;transform-origin:0 0;">00694793</div>
<div class="t" style="left:562px;top:499.86px;font-size:14.70px;font-weight:normal;color:#111;transform-origin:0 0;">POS</div>
<div class="t" style="left:393px;width:400px;text-align:right;top:499.86px;font-size:14.70px;font-weight:normal;color:#111;transform-origin:100% 0;">11,35</div>
<div class="t" style="left:501.5px;width:400px;text-align:right;top:499.86px;font-size:14.70px;font-weight:normal;color:#111;transform-origin:100% 0;">1</div>
<div class="t" style="left:646.5px;width:400px;text-align:right;top:499.86px;font-size:14.70px;font-weight:normal;color:#111;transform-origin:100% 0;">11,35</div>
<svg style="left:249px;top:359px" width="4" height="7" viewBox="0 0 4 7"><path d="M0 0 L4 3.5 L0 7 Z" fill="#ee0000"/></svg>
<svg style="left:249px;top:431px" width="4" height="7" viewBox="0 0 4 7"><path d="M0 0 L4 3.5 L0 7 Z" fill="#ee0000"/></svg>
<div style="left:1051px;top:156px;width:18px;height:364px;background:#ebebeb;box-shadow:inset 1px 0 0 #fafafa"></div>
<div style="left:1051px;top:156px;width:16px;height:17px;background:linear-gradient(90deg,#f4f4f4 0,#e6e6e6 60%,#cfcfcf 100%);border:1px solid #a2a2a2;box-sizing:border-box;border-radius:1.5px;box-shadow:inset 1px 1px 0 #fff"></div>
<svg style="left:1051px;top:156px" width="16" height="17" viewBox="0 0 16 17"><path d="M8.6 6.8 L12.4 10.8 H4.8 Z" fill="#000"/></svg>
<div style="left:1051px;top:178px;width:16px;height:8px;background:linear-gradient(90deg,#f4f4f4 0,#e6e6e6 60%,#cfcfcf 100%);border:1px solid #a2a2a2;box-sizing:border-box;border-radius:1.5px;box-shadow:inset 1px 1px 0 #fff"></div>
<div style="left:1051px;top:503px;width:16px;height:17px;background:linear-gradient(90deg,#f4f4f4 0,#e6e6e6 60%,#cfcfcf 100%);border:1px solid #a2a2a2;box-sizing:border-box;border-radius:1.5px;box-shadow:inset 1px 1px 0 #fff"></div>
<svg style="left:1051px;top:503px" width="16" height="17" viewBox="0 0 16 17"><path d="M8.6 11.2 L12.4 7.2 H4.8 Z" fill="#000"/></svg>
<div style="left:2px;top:528px;width:1070px;height:1px;background:#ababab"></div>
<div style="left:7px;top:533px;width:25px;height:283px;background:#9c9c9c"></div>
<div class="t" style="left:-20.5px;top:763px;width:80px;height:20px;transform:rotate(-90deg);font-size:19.5px;font-weight:bold;color:#fff;text-align:center;line-height:20px">Details</div>
<div style="left:39px;top:562px;width:1026px;height:253px;background:#fff;border:1px solid #5d6068;border-top-color:#4e515a;box-sizing:border-box"></div>
<div style="left:39px;top:535px;width:256px;height:28px;background:#f7f7f7;border-top:1px solid #111;border-left:1px solid #111;border-right:1px solid #111;box-sizing:border-box"></div>
<div class="t" style="left:44px;top:541.56px;font-size:14.70px;font-weight:normal;color:#111;transform-origin:0 0;"><u>B</u>estandsänderungen ab 17.01.2024</div>
<div style="left:296px;top:536px;width:118px;height:26px;background:linear-gradient(#f2f2f2 0,#e9e9e9 45%,#dcdcdc 50%,#d2d2d2 100%);border:1px solid #7c7e86;border-bottom:none;box-sizing:border-box;box-shadow:inset 1px 1px 0 #fff"></div>
<div class="t" style="left:55px;width:600px;text-align:center;top:541.56px;font-size:14.70px;font-weight:normal;color:#111;transform-origin:50% 0;"><u>L</u>agerorte</div>
<div style="left:295px;top:562px;width:770px;height:1px;background:#4e515a"></div>
<div style="left:42px;top:565px;width:1021px;height:247px;background:#fff;border:1px solid #111;box-sizing:border-box"></div>
<div style="left:62px;top:567px;width:998px;height:24px;background:linear-gradient(#eceef1 0,#ebedf0 38%,#e3e5e8 44%,#e6e7ea 100%)"></div>
<div style="left:105px;top:567px;width:1px;height:24px;background:#f7f7f7"></div>
<div style="left:107px;top:567px;width:1px;height:24px;background:#fbfbfb"></div>
<div style="left:106px;top:567px;width:1px;height:24px;background:#45454a"></div>
<div style="left:150px;top:567px;width:1px;height:24px;background:#f7f7f7"></div>
<div style="left:152px;top:567px;width:1px;height:24px;background:#fbfbfb"></div>
<div style="left:151px;top:567px;width:1px;height:24px;background:#45454a"></div>
<div style="left:245px;top:567px;width:1px;height:24px;background:#f7f7f7"></div>
<div style="left:247px;top:567px;width:1px;height:24px;background:#fbfbfb"></div>
<div style="left:246px;top:567px;width:1px;height:24px;background:#45454a"></div>
<div style="left:315px;top:567px;width:1px;height:24px;background:#f7f7f7"></div>
<div style="left:317px;top:567px;width:1px;height:24px;background:#fbfbfb"></div>
<div style="left:316px;top:567px;width:1px;height:24px;background:#45454a"></div>
<div style="left:587px;top:567px;width:1px;height:24px;background:#f7f7f7"></div>
<div style="left:589px;top:567px;width:1px;height:24px;background:#fbfbfb"></div>
<div style="left:588px;top:567px;width:1px;height:24px;background:#45454a"></div>
<div style="left:824px;top:567px;width:1px;height:24px;background:#f7f7f7"></div>
<div style="left:826px;top:567px;width:1px;height:24px;background:#fbfbfb"></div>
<div style="left:825px;top:567px;width:1px;height:24px;background:#45454a"></div>
<div class="t" style="left:-298.5px;width:400px;text-align:right;top:572.56px;font-size:14.70px;font-weight:normal;color:#1a1a1a;transform-origin:100% 0;">Alt</div>
<div class="t" style="left:-253px;width:400px;text-align:right;top:572.56px;font-size:14.70px;font-weight:normal;color:#1a1a1a;transform-origin:100% 0;">Neu</div>
<div class="t" style="left:157px;top:572.56px;font-size:14.70px;font-weight:normal;color:#1a1a1a;transform-origin:0 0;">Datum</div>
<div class="t" style="left:251px;top:572.56px;font-size:14.70px;font-weight:normal;color:#1a1a1a;transform-origin:0 0;">Uhrzeit</div>
<div class="t" style="left:318px;top:572.56px;font-size:14.70px;font-weight:normal;color:#1a1a1a;transform-origin:0 0;">Vorgang</div>
<div class="t" style="left:593px;top:572.56px;font-size:14.70px;font-weight:normal;color:#1a1a1a;transform-origin:0 0;">Programm</div>
<div class="t" style="left:830px;top:572.56px;font-size:14.70px;font-weight:normal;color:#1a1a1a;transform-origin:0 0;">Bediener</div>
<div style="left:62px;top:591px;width:999px;height:25px;border:1px dotted #222;box-sizing:border-box"></div>
<div class="t" style="left:-293.5px;width:400px;text-align:right;top:597.36px;font-size:14.70px;font-weight:normal;color:#111;transform-origin:100% 0;letter-spacing:0px">1</div>
<div class="t" style="left:-248px;width:400px;text-align:right;top:597.36px;font-size:14.70px;font-weight:normal;color:#111;transform-origin:100% 0;letter-spacing:0px">9</div>
<div class="t" style="left:157px;top:597.36px;font-size:14.70px;font-weight:normal;color:#111;transform-origin:0 0;letter-spacing:-0.35px">17.01.2025</div>
<div class="t" style="left:252px;top:597.36px;font-size:14.70px;font-weight:normal;color:#111;transform-origin:0 0;letter-spacing:0px">12:59</div>
<div class="t" style="left:320px;top:597.36px;font-size:14.70px;font-weight:normal;color:#111;transform-origin:0 0;letter-spacing:0.03px">Bestandskorrektur manuell</div>
<div class="t" style="left:592px;top:597.36px;font-size:14.70px;font-weight:normal;color:#111;transform-origin:0 0;letter-spacing:0.27px">Artikelverwaltung</div>
<div class="t" style="left:829px;top:597.36px;font-size:14.70px;font-weight:normal;color:#111;transform-origin:0 0;letter-spacing:0px">Schill</div>
<div style="left:48px;top:600px;width:9px;height:9px;background:#fff;border:1px solid #8a8a8a;box-sizing:border-box"></div>
<div style="left:50px;top:604px;width:5px;height:1px;background:#222"></div>
<div style="left:57px;top:604px;width:5px;height:1px;background:repeating-linear-gradient(90deg,#999 0 1px,transparent 1px 2px)"></div>
<div style="left:71px;top:616px;width:1px;height:43px;background:repeating-linear-gradient(#aaa 0 1px,transparent 1px 2px)"></div>
<div style="left:71px;top:659px;width:10px;height:1px;background:repeating-linear-gradient(90deg,#aaa 0 1px,transparent 1px 2px)"></div>
<div style="left:81px;top:621px;width:979px;height:25px;background:linear-gradient(#eceef1 0,#ebedf0 38%,#e3e5e8 44%,#e6e7ea 100%)"></div>
<div style="left:81px;top:646px;width:979px;height:1px;background:#48484d"></div>
<div style="left:296px;top:621px;width:1px;height:25px;background:#f7f7f7"></div>
<div style="left:298px;top:621px;width:1px;height:25px;background:#fbfbfb"></div>
<div style="left:297px;top:621px;width:1px;height:25px;background:#45454a"></div>
<div style="left:297px;top:647px;width:1px;height:23px;background:#efefef"></div>
<div style="left:514px;top:621px;width:1px;height:25px;background:#f7f7f7"></div>
<div style="left:516px;top:621px;width:1px;height:25px;background:#fbfbfb"></div>
<div style="left:515px;top:621px;width:1px;height:25px;background:#45454a"></div>
<div style="left:515px;top:647px;width:1px;height:23px;background:#efefef"></div>
<div style="left:188px;top:647px;width:1px;height:23px;background:#efefef"></div>
<div style="left:407px;top:647px;width:1px;height:23px;background:#efefef"></div>
<div class="t" style="left:-111px;width:600px;text-align:center;top:628.36px;font-size:14.70px;font-weight:normal;color:#1a1a1a;transform-origin:50% 0;letter-spacing:0.27px">alte Bestands-/Verfalldaten</div>
<div class="t" style="left:106.5px;width:600px;text-align:center;top:628.36px;font-size:14.70px;font-weight:normal;color:#1a1a1a;transform-origin:50% 0;letter-spacing:0.2px">neue Bestands-/Verfalldaten</div>
<div class="t" style="left:-211.5px;width:400px;text-align:right;top:652.86px;font-size:14.70px;font-weight:normal;color:#111;transform-origin:100% 0;">1</div>
<div class="t" style="left:192px;top:652.86px;font-size:14.70px;font-weight:normal;color:#111;transform-origin:0 0;letter-spacing:-0.5px">10.2017</div>
<div class="t" style="left:6.5px;width:400px;text-align:right;top:652.86px;font-size:14.70px;font-weight:normal;color:#111;transform-origin:100% 0;">9</div>
<div class="t" style="left:410px;top:652.86px;font-size:14.70px;font-weight:normal;color:#111;transform-origin:0 0;letter-spacing:-0.5px">10.2017</div>
<div style="left:2px;top:821px;width:1070px;height:2px;background:#b4b4b4"></div>
<div style="left:2px;top:823px;width:1070px;height:63px;background:linear-gradient(#fbfbfb,#c9c9c9)"></div>
<div style="left:2px;top:886px;width:1070px;height:2px;background:#8c8c8c"></div>
<div style="left:2px;top:888px;width:1070px;height:4px;background:#a9a9a9"></div>
<div style="left:91px;top:888px;width:1px;height:4px;background:#7a7a7a"></div>
<div style="left:92px;top:888px;width:1px;height:4px;background:#e0e0e0"></div>
<div style="left:175px;top:888px;width:1px;height:4px;background:#7a7a7a"></div>
<div style="left:176px;top:888px;width:1px;height:4px;background:#e0e0e0"></div>
<div style="left:259px;top:888px;width:1px;height:4px;background:#7a7a7a"></div>
<div style="left:260px;top:888px;width:1px;height:4px;background:#e0e0e0"></div>
<div style="left:343px;top:888px;width:1px;height:4px;background:#7a7a7a"></div>
<div style="left:344px;top:888px;width:1px;height:4px;background:#e0e0e0"></div>
<div style="left:427px;top:888px;width:1px;height:4px;background:#7a7a7a"></div>
<div style="left:428px;top:888px;width:1px;height:4px;background:#e0e0e0"></div>
<div style="left:511px;top:888px;width:1px;height:4px;background:#7a7a7a"></div>
<div style="left:512px;top:888px;width:1px;height:4px;background:#e0e0e0"></div>
<div style="left:595px;top:888px;width:1px;height:4px;background:#7a7a7a"></div>
<div style="left:596px;top:888px;width:1px;height:4px;background:#e0e0e0"></div>
<div style="left:679px;top:888px;width:1px;height:4px;background:#7a7a7a"></div>
<div style="left:680px;top:888px;width:1px;height:4px;background:#e0e0e0"></div>
<div style="left:763px;top:888px;width:1px;height:4px;background:#7a7a7a"></div>
<div style="left:764px;top:888px;width:1px;height:4px;background:#e0e0e0"></div>
<div style="left:847px;top:888px;width:1px;height:4px;background:#7a7a7a"></div>
<div style="left:848px;top:888px;width:1px;height:4px;background:#e0e0e0"></div>
<div style="left:931px;top:888px;width:1px;height:4px;background:#7a7a7a"></div>
<div style="left:932px;top:888px;width:1px;height:4px;background:#e0e0e0"></div>
<div style="left:1025px;top:888px;width:1px;height:4px;background:#7a7a7a"></div>
<div style="left:1026px;top:888px;width:1px;height:4px;background:#e0e0e0"></div>
<div class="t" style="left:-272.5px;width:600px;text-align:center;top:833.02px;font-size:13.80px;font-weight:bold;color:#6a6a6a;transform-origin:50% 0;">Strg</div>
<div class="t" style="left:-272.5px;width:600px;text-align:center;top:862.82px;font-size:13.80px;font-weight:bold;color:#6a6a6a;transform-origin:50% 0;">Alt</div>
<div style="left:52px;top:823px;width:2px;height:63px;background:#939393"></div>
<div style="left:54px;top:823px;width:1px;height:63px;background:#fafafa"></div>
<div class="t" style="left:-205.8px;width:600px;text-align:center;top:867.09px;font-size:13.60px;font-weight:bold;color:#b4b4b4;transform-origin:50% 0;">F1</div>
<div style="left:136px;top:823px;width:2px;height:63px;background:#939393"></div>
<div style="left:138px;top:823px;width:1px;height:63px;background:#fafafa"></div>
<div class="t" style="left:-121.80000000000001px;width:600px;text-align:center;top:867.09px;font-size:13.60px;font-weight:bold;color:#b4b4b4;transform-origin:50% 0;">F2</div>
<div style="left:220px;top:823px;width:2px;height:63px;background:#939393"></div>
<div style="left:222px;top:823px;width:1px;height:63px;background:#fafafa"></div>
<div class="t" style="left:-37.80000000000001px;width:600px;text-align:center;top:828.69px;font-size:13.60px;font-weight:normal;color:#111;transform-origin:50% 0;">Neu</div>
<div class="t" style="left:-37.80000000000001px;width:600px;text-align:center;top:867.09px;font-size:13.60px;font-weight:bold;color:#111;transform-origin:50% 0;">F3</div>
<div style="left:304px;top:823px;width:2px;height:63px;background:#939393"></div>
<div style="left:306px;top:823px;width:1px;height:63px;background:#fafafa"></div>
<div class="t" style="left:46.19999999999999px;width:600px;text-align:center;top:828.69px;font-size:13.60px;font-weight:normal;color:#a8a8a8;transform-origin:50% 0;">Eintrag</div>
<div class="t" style="left:46.19999999999999px;width:600px;text-align:center;top:847.69px;font-size:13.60px;font-weight:normal;color:#a8a8a8;transform-origin:50% 0;">entfernen</div>
<div class="t" style="left:46.19999999999999px;width:600px;text-align:center;top:867.09px;font-size:13.60px;font-weight:bold;color:#b4b4b4;transform-origin:50% 0;">F4</div>
<div style="left:388px;top:823px;width:2px;height:63px;background:#939393"></div>
<div style="left:390px;top:823px;width:1px;height:63px;background:#fafafa"></div>
<div class="t" style="left:130.2px;width:600px;text-align:center;top:828.69px;font-size:13.60px;font-weight:normal;color:#a8a8a8;transform-origin:50% 0;">Bestand</div>
<div class="t" style="left:130.2px;width:600px;text-align:center;top:847.69px;font-size:13.60px;font-weight:normal;color:#a8a8a8;transform-origin:50% 0;">bearbeiten</div>
<div class="t" style="left:130.2px;width:600px;text-align:center;top:867.09px;font-size:13.60px;font-weight:bold;color:#b4b4b4;transform-origin:50% 0;">F5</div>
<div style="left:472px;top:823px;width:2px;height:63px;background:#939393"></div>
<div style="left:474px;top:823px;width:1px;height:63px;background:#fafafa"></div>
<div class="t" style="left:214.20000000000005px;width:600px;text-align:center;top:828.69px;font-size:13.60px;font-weight:normal;color:#a8a8a8;transform-origin:50% 0;">EK</div>
<div class="t" style="left:214.20000000000005px;width:600px;text-align:center;top:847.69px;font-size:13.60px;font-weight:normal;color:#a8a8a8;transform-origin:50% 0;">ändern</div>
<div class="t" style="left:214.20000000000005px;width:600px;text-align:center;top:867.09px;font-size:13.60px;font-weight:bold;color:#b4b4b4;transform-origin:50% 0;">F6</div>
<div style="left:556px;top:823px;width:2px;height:63px;background:#939393"></div>
<div style="left:558px;top:823px;width:1px;height:63px;background:#fafafa"></div>
<div class="t" style="left:298.20000000000005px;width:600px;text-align:center;top:867.09px;font-size:13.60px;font-weight:bold;color:#b4b4b4;transform-origin:50% 0;">F7</div>
<div style="left:640px;top:823px;width:2px;height:63px;background:#939393"></div>
<div style="left:642px;top:823px;width:1px;height:63px;background:#fafafa"></div>
<div class="t" style="left:382.20000000000005px;width:600px;text-align:center;top:828.69px;font-size:13.60px;font-weight:normal;color:#a8a8a8;transform-origin:50% 0;">Details</div>
<div class="t" style="left:382.20000000000005px;width:600px;text-align:center;top:867.09px;font-size:13.60px;font-weight:bold;color:#b4b4b4;transform-origin:50% 0;">F8</div>
<div style="left:724px;top:823px;width:2px;height:63px;background:#939393"></div>
<div style="left:726px;top:823px;width:1px;height:63px;background:#fafafa"></div>
<div class="t" style="left:466.20000000000005px;width:600px;text-align:center;top:828.69px;font-size:13.60px;font-weight:normal;color:#111;transform-origin:50% 0;">Drucken</div>
<div class="t" style="left:466.20000000000005px;width:600px;text-align:center;top:867.09px;font-size:13.60px;font-weight:bold;color:#111;transform-origin:50% 0;">F9</div>
<div style="left:808px;top:823px;width:2px;height:63px;background:#939393"></div>
<div style="left:810px;top:823px;width:1px;height:63px;background:#fafafa"></div>
<div class="t" style="left:550.2px;width:600px;text-align:center;top:828.69px;font-size:13.60px;font-weight:normal;color:#a8a8a8;transform-origin:50% 0;">Status</div>
<div class="t" style="left:550.2px;width:600px;text-align:center;top:847.69px;font-size:13.60px;font-weight:normal;color:#a8a8a8;transform-origin:50% 0;">ändern</div>
<div class="t" style="left:550.2px;width:600px;text-align:center;top:867.09px;font-size:13.60px;font-weight:bold;color:#b4b4b4;transform-origin:50% 0;">F10</div>
<div style="left:892px;top:823px;width:2px;height:63px;background:#939393"></div>
<div style="left:894px;top:823px;width:1px;height:63px;background:#fafafa"></div>
<div class="t" style="left:634.2px;width:600px;text-align:center;top:828.69px;font-size:13.60px;font-weight:normal;color:#111;transform-origin:50% 0;">Alle</div>
<div class="t" style="left:634.2px;width:600px;text-align:center;top:847.69px;font-size:13.60px;font-weight:normal;color:#111;transform-origin:50% 0;">Markieren</div>
<div class="t" style="left:634.2px;width:600px;text-align:center;top:867.09px;font-size:13.60px;font-weight:bold;color:#111;transform-origin:50% 0;">F11</div>
<div style="left:976px;top:823px;width:2px;height:63px;background:#939393"></div>
<div style="left:978px;top:823px;width:1px;height:63px;background:#fafafa"></div>
<div class="t" style="left:723.3px;width:600px;text-align:center;top:867.09px;font-size:13.60px;font-weight:bold;color:#b4b4b4;transform-origin:50% 0;">F12</div>
<div style="left:1070px;top:823px;width:2px;height:63px;background:#939393"></div>
</body></html>
